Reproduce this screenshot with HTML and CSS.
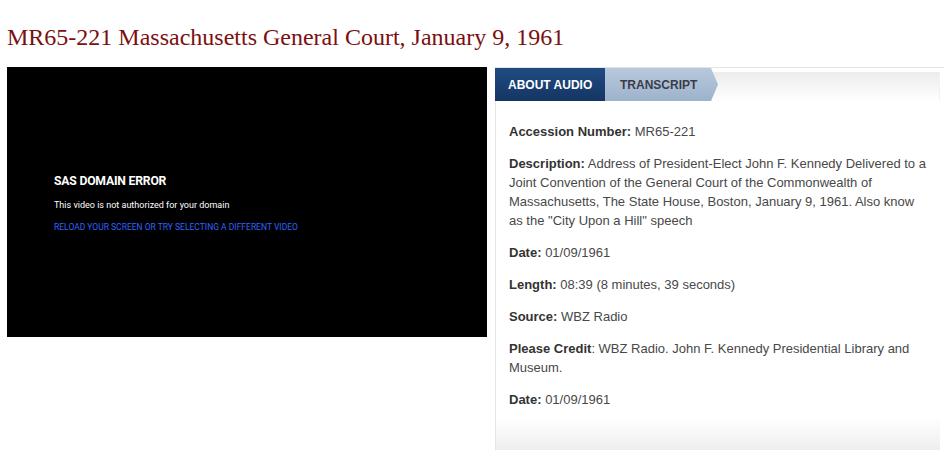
FILE: index.html
```html
<!DOCTYPE html>
<html>
<head>
<meta charset="utf-8">
<link rel="stylesheet" href="styles.css">
</head>
<body>
<div class="page">
  <h1 class="title">MR65-221 Massachusetts General Court, January 9, 1961</h1>
  <div class="main">
    <div class="video">
      <div class="err-title">SAS DOMAIN ERROR</div>
      <div class="err-msg">This video is not authorized for your domain</div>
      <div class="err-link">RELOAD YOUR SCREEN OR TRY SELECTING A DIFFERENT VIDEO</div>
    </div>
    <div class="panel">
      <div class="tabs">
        <div class="tab tab-active">ABOUT AUDIO</div>
        <div class="tab tab-next">TRANSCRIPT</div>
        <div class="tab-fill"></div>
      </div>
      <div class="body">
        <p><b>Accession Number:</b> MR65-221</p>
        <p><b>Description:</b> Address of President-Elect John F. Kennedy Delivered to a Joint Convention of the General Court of the Commonwealth of Massachusetts, The State House, Boston, January 9, 1961. Also know as the "City Upon a Hill" speech</p>
        <p><b>Date:</b> 01/09/1961</p>
        <p><b>Length:</b> 08:39 (8 minutes, 39 seconds)</p>
        <p><b>Source:</b> WBZ Radio</p>
        <p><b>Please Credit</b>: WBZ Radio. John F. Kennedy Presidential Library and Museum.</p>
        <p><b>Date:</b> 01/09/1961</p>
      </div>
    </div>
  </div>
</div>
</body>
</html>
```
FILE: styles.css
```css
* { box-sizing: border-box; }
html, body { margin: 0; padding: 0; background: #fff; }
body { width: 944px; height: 450px; overflow: hidden; }
.page { padding: 0 0 0 7px; }
.title {
  margin: 0;
  padding-top: 23px;
  height: 67px;
  font-family: "Liberation Serif", "DejaVu Serif", serif;
  font-weight: normal;
  font-size: 24px;
  line-height: 28px;
  color: #7b1010;
}
.main { display: flex; gap: 8px; align-items: flex-start; }
.video {
  width: 480px;
  height: 270px;
  flex: none;
  background: #000;
  padding: 107px 0 0 47px;
  font-family: Roboto, "Open Sans", sans-serif;
}
.err-title { color: #fff; font-weight: bold; font-size: 12.2px; line-height: 14px; letter-spacing: -0.2px; }
.err-msg { color: #fff; font-size: 9px; line-height: 10px; margin-top: 12px; }
.err-link { color: #2f63ff; font-size: 8.5px; line-height: 10px; margin-top: 12px; }
.panel {
  flex: 1;
  border-top: 1px solid #e4e4e4;
  height: 383px;
  font-family: "Liberation Sans", Arial, sans-serif;
}
.tabs { display: flex; height: 33px; align-items: stretch; }
.tab {
  font-weight: bold;
  font-size: 12px;
  line-height: 34px;
}
.tab-active {
  width: 110px;
  padding-left: 13px;
  color: #fff;
  background: linear-gradient(#1f4b82, #163563);
}
.tab-next {
  width: 113px;
  padding-left: 15px;
  color: #3c3c48;
  background: linear-gradient(#b8c9dc, #9db2cb);
  clip-path: polygon(0 0, 106px 0, 113px 50%, 106px 100%, 0 100%);
}
.tab-fill {
  flex: 1;
  margin: 4px 4px 0 -7px;
  background: linear-gradient(#ececec, #fbfbfb 80%, #fff);
  border-right: 1px solid #f2f2f2;
}
.body {
  border-left: 1px solid #e6e6e6;
  margin-right: 4px;
  height: 349px;
  padding: 21px 10px 0 13px;
  background: linear-gradient(to bottom, #fff 0, #fff 317px, #eeeeee 349px);
  font-size: 13px;
  line-height: 19px;
  color: #484848;
}
.body p { margin: 0 0 13px; }
.body b { color: #333; }
```
